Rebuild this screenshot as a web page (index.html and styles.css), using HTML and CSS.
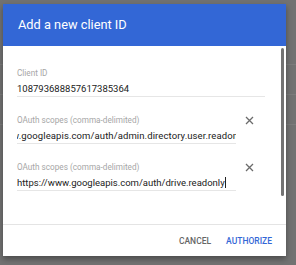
FILE: index.html
```html
<!DOCTYPE html>
<html lang="en">
<head>
    <meta charset="UTF-8">
    <title>Add a new client ID</title>
    <link rel="stylesheet" href="styles.css">
</head>
<body>
    <!-- Page behind the dialog -->
    <div class="backdrop">
        <div class="back-row"></div>
        <div class="back-row"></div>
        <div class="back-row"></div>
    </div>

    <!-- Dialog -->
    <div class="dialog">
        <div class="dialog-header">Add a new client ID</div>

        <div class="dialog-body">
            <div class="field field-wide">
                <div class="field-label">Client ID</div>
                <div class="field-value">108793688857617385364</div>
            </div>

            <div class="field-row">
                <div class="field">
                    <div class="field-label">OAuth scopes (comma-delimited)</div>
                    <div class="field-value"><span class="scrolled">https://www.googleapis.com/auth/admin.directory.user.readonly</span></div>
                </div>
                <span class="remove">
                    <svg width="9" height="9" viewBox="0 0 9 9"><path d="M1 1L8 8M8 1L1 8" stroke="#6b6b6b" stroke-width="1.3"/></svg>
                </span>
            </div>

            <div class="field-row">
                <div class="field">
                    <div class="field-label">OAuth scopes (comma-delimited)</div>
                    <div class="field-value">https://www.googleapis.com/auth/drive.readonly<span class="caret"></span></div>
                </div>
                <span class="remove">
                    <svg width="9" height="9" viewBox="0 0 9 9"><path d="M1 1L8 8M8 1L1 8" stroke="#6b6b6b" stroke-width="1.3"/></svg>
                </span>
            </div>

            <div class="scrollbar"></div>
        </div>

        <div class="dialog-footer">
            <button class="btn btn-cancel">Cancel</button>
            <button class="btn btn-authorize">Authorize</button>
        </div>
    </div>
</body>
</html>
```

FILE: styles.css
```css
/* Reset */
* {
    margin: 0;
    padding: 0;
    box-sizing: border-box;
    font-family: Roboto, "Liberation Sans", Arial, sans-serif;
}

body {
    background-color: #727272;
    width: 296px;
    height: 265px;
    overflow: hidden;
    position: relative;
}

/* Faint rows of the page under the overlay */
.backdrop {
    position: absolute;
    top: 0;
    left: 0;
    width: 296px;
    padding-top: 64px;
}

.back-row {
    height: 30px;
    border-top: 1px solid #7c7c7c;
}

/* Dialog */
.dialog {
    position: relative;
    margin: 4px 0 0 3px;
    width: 283px;
    height: 252px;
    background: #ffffff;
    box-shadow: 0 3px 6px rgba(0, 0, 0, 0.35);
    display: flex;
    flex-direction: column;
}

.dialog-header {
    height: 42px;
    background-color: #3367d6;
    color: #ffffff;
    font-size: 12.8px;
    line-height: 42px;
    padding-left: 15px;
}

.dialog-body {
    position: relative;
    flex: 1;
    padding: 22px 0 0 14px;
    display: flex;
    flex-direction: column;
    gap: 18px;
}

.field {
    width: 248px;
}

.field-row {
    display: flex;
    align-items: flex-start;
}

.field-row .field {
    width: 219px;
}

.field-label {
    font-size: 8.2px;
    line-height: 10px;
    color: #a6a6a6;
}

.field-value {
    margin-top: 3px;
    height: 16px;
    font-size: 9.5px;
    line-height: 16px;
    color: #212121;
    border-bottom: 1px solid #e6e6e6;
    white-space: nowrap;
    overflow: hidden;
}

.scrolled {
    display: inline-block;
    margin-left: -51px;
    letter-spacing: 0.1px;
}

.caret {
    display: inline-block;
    width: 1px;
    height: 11px;
    background: #212121;
    vertical-align: -2px;
}

.remove {
    margin: 1px 0 0 9px;
    width: 9px;
    height: 9px;
    display: flex;
}

.scrollbar {
    position: absolute;
    top: 2px;
    right: 2px;
    width: 3px;
    height: 148px;
    border-radius: 2px;
    background: #737373;
}

/* Footer */
.dialog-footer {
    height: 32px;
    border-top: 1px solid #e4e4e4;
    display: flex;
    align-items: center;
    justify-content: flex-end;
    gap: 15px;
    padding-right: 14px;
}

.btn {
    background: none;
    border: none;
    text-transform: uppercase;
    font-size: 8.5px;
    font-weight: 500;
    cursor: pointer;
}

.btn-cancel {
    color: #666666;
}

.btn-authorize {
    color: #3367d6;
}
```
